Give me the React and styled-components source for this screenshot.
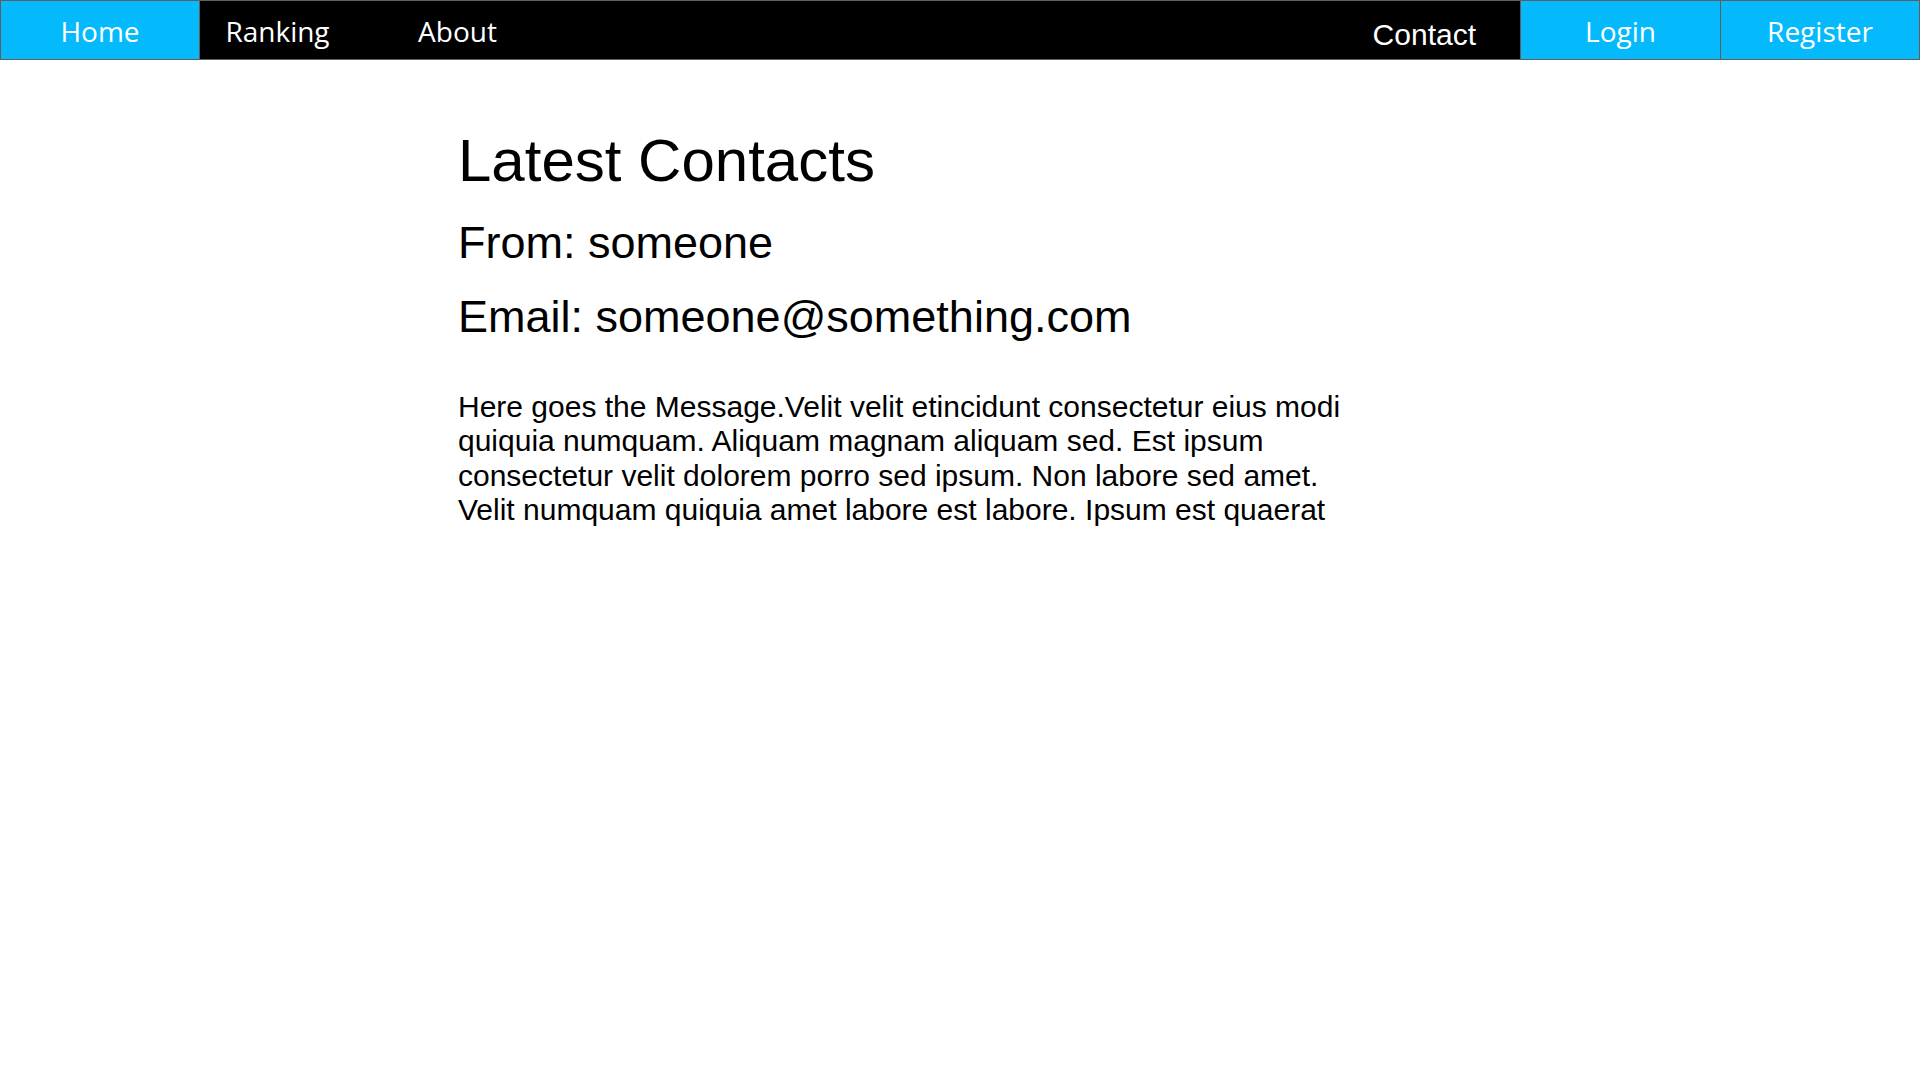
import React from "react";
import styled, { createGlobalStyle } from "styled-components";

const Global = createGlobalStyle`
  html, body { margin: 0; padding: 0; background: #ffffff; }
  body { font-family: "Liberation Sans", Arial, sans-serif; color: #000; }
  * { box-sizing: border-box; }
`;

const Nav = styled.nav`
  display: flex;
  align-items: stretch;
  height: 60px;
  background: #000;
  border: 1px solid #5f5f5f;
`;

const NavItem = styled.a`
  display: flex;
  align-items: center;
  justify-content: ${(p) => (p.$align === "right" ? "flex-end" : "center")};
  flex: none;
  width: ${(p) => p.$w}px;
  padding: ${(p) => p.$pad || "2px 0 0 0"};
  background: ${(p) => (p.$blue ? "#05bafc" : "transparent")};
  border-left: ${(p) => (p.$bl ? "1px solid #5f5f5f" : "none")};
  border-right: ${(p) => (p.$br ? "1px solid #5f5f5f" : "none")};
  color: #fff;
  text-decoration: none;
  font-family: ${(p) => (p.$arial ? '"Liberation Sans", Arial, sans-serif' : '"Open Sans", "Noto Sans", sans-serif')};
  font-size: ${(p) => (p.$arial ? 30 : 28)}px;
  line-height: 1;
`;

const Spacer = styled.div`
  flex: 1;
`;

const Main = styled.main`
  padding: 66px 0 0 458px;
`;

const Title = styled.h1`
  margin: 0;
  font-size: 60px;
  font-weight: 400;
  line-height: 1.15;
`;

const Meta = styled.h2`
  margin: ${(p) => p.$gap}px 0 0;
  font-size: 45px;
  font-weight: 400;
  line-height: 1.15;
`;

const Message = styled.p`
  width: 900px;
  margin: 47px 0 0;
  font-size: 30px;
  line-height: 1.15;
`;

export default function App() {
  return (
    <>
      <Global />
      <Nav>
        <NavItem $w={199} $blue $br>Home</NavItem>
        <NavItem $w={155}>Ranking</NavItem>
        <NavItem $w={205}>About</NavItem>
        <Spacer />
        <NavItem $w={200} $align="right" $arial $pad="9px 44px 0 0">Contact</NavItem>
        <NavItem $w={200} $blue $bl>Login</NavItem>
        <NavItem $w={199} $blue $bl>Register</NavItem>
      </Nav>
      <Main>
        <Title>Latest Contacts</Title>
        <Meta $gap={22}>From: someone</Meta>
        <Meta $gap={22}>Email: someone@something.com</Meta>
        <Message>
          Here goes the Message.Velit velit etincidunt consectetur eius modi quiquia numquam.
          Aliquam magnam aliquam sed. Est ipsum consectetur velit dolorem porro sed ipsum. Non
          labore sed amet. Velit numquam quiquia amet labore est labore. Ipsum est quaerat
        </Message>
      </Main>
    </>
  );
}
